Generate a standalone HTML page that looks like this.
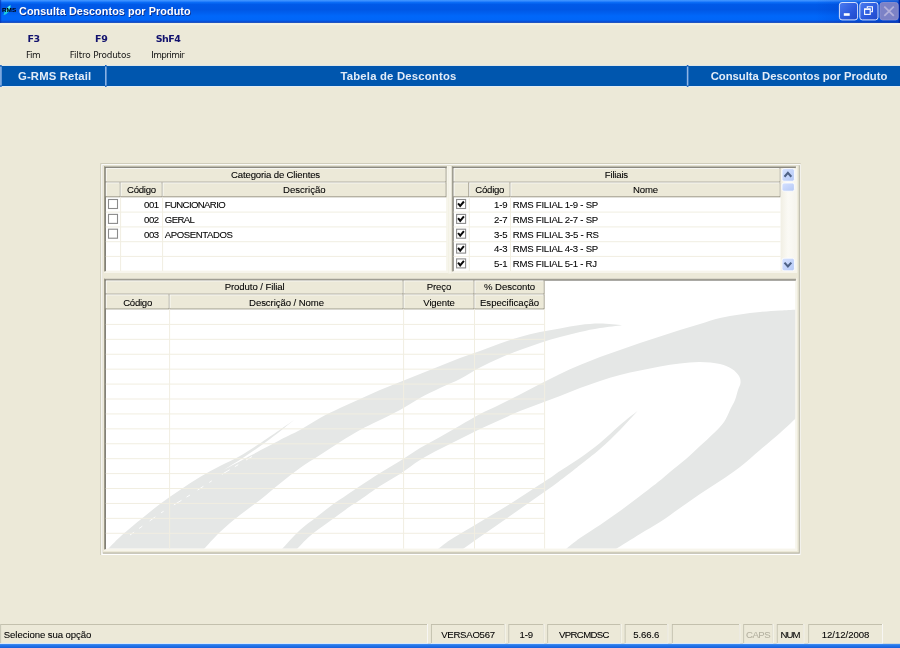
<!DOCTYPE html>
<html lang="pt-BR">
<head>
<meta charset="utf-8">
<title>Consulta Descontos por Produto</title>
<style>
*{box-sizing:border-box;margin:0;padding:0}
html,body{width:900px;height:648px;overflow:hidden;background:#ECE9D8;font-family:"Liberation Sans",sans-serif;color:#000}
#app{position:relative;width:900px;height:648px;overflow:hidden}
#tx{position:absolute;left:0;top:0;width:900px;height:648px;will-change:transform}
#bg{position:absolute;left:0;top:0}
.t{position:absolute;white-space:nowrap;line-height:1.15}
.g{font-size:9.6px;color:#000;-webkit-text-stroke-width:0.08px}
.dis{color:#B4B1A0}
.ttl{font-weight:bold;font-size:11.7px;color:#fff;text-shadow:0.8px 0.8px 0.6px #0B2E8C;transform:scaleX(0.9225);transform-origin:0 0;letter-spacing:0.1px}
.ico{font-size:4.7px;font-weight:bold;color:#000;transform:scaleX(1.36);transform-origin:0 0}
.k{font-family:"DejaVu Sans","Liberation Sans",sans-serif;font-weight:bold;font-size:9.5px;color:#12126E}
.lb{font-family:"DejaVu Sans","Liberation Sans",sans-serif;font-size:8.9px;color:#151515}
.bb{font-weight:bold;font-size:11.3px;color:#E3ECF7}
</style>
</head>
<body>
<div id="app">
<svg id="bg" width="900" height="648" viewBox="0 0 900 648"><rect x="100.3" y="163.2" width="700.4" height="391.8" fill="#C9C6B4"/>
<rect x="101.2" y="164.1" width="699.5" height="390.9" fill="#FFFFFF"/>
<rect x="102.7" y="165.2" width="697.1" height="388.5" fill="#B4B1A0"/>
<rect x="102.7" y="165.2" width="696.1" height="387.3" fill="#ECE9D8"/>
<rect x="104" y="166.3" width="344" height="106.2" fill="#FFFFFF"/>
<rect x="104" y="270.6" width="344" height="1.9" fill="#F7F5EC"/>
<rect x="446.1" y="166.3" width="1.9" height="106.2" fill="#F7F5EC"/>
<rect x="104" y="166.3" width="343" height="1" fill="#A19E8D"/>
<rect x="104" y="166.3" width="1" height="105.2" fill="#A19E8D"/>
<rect x="104.9" y="167.2" width="341.8" height="1" fill="#75736A"/>
<rect x="104.9" y="167.2" width="1" height="104" fill="#75736A"/>
<rect x="105.8" y="168.1" width="340.7" height="14.4" fill="#9F9B89"/>
<rect x="105.8" y="168.1" width="339.55" height="13.25" fill="#FFFFFF"/>
<rect x="106.6" y="168.9" width="338.75" height="12.45" fill="#ECE9D8"/>
<rect x="105.8" y="182.5" width="14.8" height="14.8" fill="#9F9B89"/>
<rect x="105.8" y="182.5" width="13.65" height="13.65" fill="#FFFFFF"/>
<rect x="106.6" y="183.3" width="12.85" height="12.85" fill="#ECE9D8"/>
<rect x="120.6" y="182.5" width="42" height="14.8" fill="#9F9B89"/>
<rect x="120.6" y="182.5" width="40.85" height="13.65" fill="#FFFFFF"/>
<rect x="121.4" y="183.3" width="40.05" height="12.85" fill="#ECE9D8"/>
<rect x="162.6" y="182.5" width="283.9" height="14.8" fill="#9F9B89"/>
<rect x="162.6" y="182.5" width="282.75" height="13.65" fill="#FFFFFF"/>
<rect x="163.4" y="183.3" width="281.95" height="12.85" fill="#ECE9D8"/>
<rect x="105.8" y="211.6" width="340.7" height="1" fill="#F1EEE1"/>
<rect x="105.8" y="226.4" width="340.7" height="1" fill="#F1EEE1"/>
<rect x="105.8" y="241.2" width="340.7" height="1" fill="#F1EEE1"/>
<rect x="105.8" y="255.9" width="340.7" height="1" fill="#F1EEE1"/>
<rect x="120.1" y="197.3" width="1" height="73.7" fill="#F1EEE1"/>
<rect x="162.1" y="197.3" width="1" height="73.7" fill="#F1EEE1"/>
<rect x="448.3" y="166" width="3.2" height="107.5" fill="#F7F5EC"/>
<rect x="451.8" y="166.3" width="345.3" height="106.2" fill="#FFFFFF"/>
<rect x="451.8" y="270.6" width="345.3" height="1.9" fill="#F7F5EC"/>
<rect x="795.2" y="166.3" width="1.9" height="106.2" fill="#F7F5EC"/>
<rect x="451.8" y="166.3" width="344.3" height="1" fill="#A19E8D"/>
<rect x="451.8" y="166.3" width="1" height="105.2" fill="#A19E8D"/>
<rect x="452.7" y="167.2" width="343.1" height="1" fill="#75736A"/>
<rect x="452.7" y="167.2" width="1" height="104" fill="#75736A"/>
<rect x="453.6" y="168.1" width="327" height="14.4" fill="#9F9B89"/>
<rect x="453.6" y="168.1" width="325.85" height="13.25" fill="#FFFFFF"/>
<rect x="454.4" y="168.9" width="325.05" height="12.45" fill="#ECE9D8"/>
<rect x="453.6" y="182.5" width="15.7" height="14.8" fill="#9F9B89"/>
<rect x="453.6" y="182.5" width="14.55" height="13.65" fill="#FFFFFF"/>
<rect x="454.4" y="183.3" width="13.75" height="12.85" fill="#ECE9D8"/>
<rect x="469.3" y="182.5" width="41.2" height="14.8" fill="#9F9B89"/>
<rect x="469.3" y="182.5" width="40.05" height="13.65" fill="#FFFFFF"/>
<rect x="470.1" y="183.3" width="39.25" height="12.85" fill="#ECE9D8"/>
<rect x="510.5" y="182.5" width="270.1" height="14.8" fill="#9F9B89"/>
<rect x="510.5" y="182.5" width="268.95" height="13.65" fill="#FFFFFF"/>
<rect x="511.3" y="183.3" width="268.15" height="12.85" fill="#ECE9D8"/>
<rect x="453.6" y="211.6" width="327" height="1" fill="#F1EEE1"/>
<rect x="453.6" y="226.4" width="327" height="1" fill="#F1EEE1"/>
<rect x="453.6" y="241.2" width="327" height="1" fill="#F1EEE1"/>
<rect x="453.6" y="255.9" width="327" height="1" fill="#F1EEE1"/>
<rect x="468.8" y="197.3" width="1" height="73.7" fill="#F1EEE1"/>
<rect x="510" y="197.3" width="1" height="73.7" fill="#F1EEE1"/>
<defs><linearGradient id="trk" x1="0" x2="1" y1="0" y2="0"><stop offset="0" stop-color="#F1EFE4"/><stop offset="0.5" stop-color="#FBFAF5"/><stop offset="1" stop-color="#F6F5EE"/></linearGradient><linearGradient id="btn" x1="0" x2="1" y1="0" y2="1"><stop offset="0" stop-color="#D6E2FF"/><stop offset="1" stop-color="#B4C8F6"/></linearGradient><linearGradient id="tb" x1="0" x2="0" y1="0" y2="1"><stop offset="0" stop-color="#459AFF"/><stop offset="0.05" stop-color="#2F86FF"/><stop offset="0.11" stop-color="#0A6CF6"/><stop offset="0.2" stop-color="#0059E8"/><stop offset="0.42" stop-color="#0057E5"/><stop offset="0.56" stop-color="#005FEF"/><stop offset="0.7" stop-color="#0067FA"/><stop offset="0.87" stop-color="#0066F8"/><stop offset="0.94" stop-color="#0A50D6"/><stop offset="1" stop-color="#0840B8"/></linearGradient><linearGradient id="wb" x1="0" x2="1" y1="0" y2="1"><stop offset="0" stop-color="#4C7CF0"/><stop offset="0.6" stop-color="#2A58DC"/><stop offset="1" stop-color="#1F48C8"/></linearGradient><linearGradient id="bb" x1="0" x2="0" y1="0" y2="1"><stop offset="0" stop-color="#4A92F2"/><stop offset="0.4" stop-color="#2577EA"/><stop offset="1" stop-color="#165FDC"/></linearGradient><linearGradient id="tbr" x1="0" x2="1" y1="0" y2="0"><stop offset="0" stop-color="#0020A0" stop-opacity="0"/><stop offset="1" stop-color="#0020A0" stop-opacity="0.4"/></linearGradient></defs>
<rect x="780.6" y="168.1" width="15" height="102.9" fill="url(#trk)"/>
<rect x="782" y="168.6" width="12.4" height="12.6" rx="2" fill="url(#btn)" stroke="#FFFFFF" stroke-width="0.8"/>
<rect x="782" y="183" width="12.4" height="8.2" rx="2" fill="url(#btn)" stroke="#FFFFFF" stroke-width="0.8"/>
<rect x="782" y="258.2" width="12.4" height="12.6" rx="2" fill="url(#btn)" stroke="#FFFFFF" stroke-width="0.8"/>
<path d="M784.5 176.7 L787.9 172.9 L791.3 176.7" fill="none" stroke="#4D6185" stroke-width="2.1"/>
<path d="M784.5 262.6 L787.9 266.4 L791.3 262.6" fill="none" stroke="#4D6185" stroke-width="2.1"/>
<rect x="104" y="278.7" width="693.1" height="271.8" fill="#FFFFFF"/>
<rect x="104" y="548.6" width="693.1" height="1.9" fill="#F7F5EC"/>
<rect x="795.2" y="278.7" width="1.9" height="271.8" fill="#F7F5EC"/>
<rect x="104" y="278.7" width="692.1" height="1" fill="#A19E8D"/>
<rect x="104" y="278.7" width="1" height="270.8" fill="#A19E8D"/>
<rect x="104.9" y="279.6" width="690.9" height="1" fill="#75736A"/>
<rect x="104.9" y="279.6" width="1" height="269.6" fill="#75736A"/>
<clipPath id="wm"><rect x="105.8" y="280.5" width="689.4" height="268.1"/></clipPath>
<g clip-path="url(#wm)" fill="#E5E7E6"><path d="M108.0 549.0 C110.0 547.0 114.7 541.8 120.0 537.0 C125.3 532.2 133.3 525.5 140.0 520.0 C146.7 514.5 153.3 509.0 160.0 504.0 C166.7 499.0 173.3 494.5 180.0 490.0 C186.7 485.5 193.3 481.0 200.0 477.0 C206.7 473.0 213.3 469.5 220.0 466.0 C226.7 462.5 233.0 460.0 240.0 456.0 C247.0 452.0 253.0 448.0 262.0 442.0 C271.0 436.0 288.7 423.7 294.0 420.0 C290.0 423.2 278.2 432.9 270.0 439.0 C261.8 445.1 253.0 451.2 245.0 456.5 C237.0 461.8 225.8 468.6 222.0 471.0 C226.0 468.8 236.3 463.2 246.0 458.0 C255.7 452.8 271.0 444.7 280.0 440.0 C289.0 435.3 293.3 433.7 300.0 430.0 C306.7 426.3 313.3 421.7 320.0 418.0 C326.7 414.3 333.3 411.2 340.0 408.0 C346.7 404.8 353.3 402.0 360.0 399.0 C366.7 396.0 373.3 392.8 380.0 390.0 C386.7 387.2 393.3 384.7 400.0 382.0 C406.7 379.3 413.3 376.7 420.0 374.0 C426.7 371.3 433.3 368.7 440.0 366.0 C446.7 363.3 453.3 360.5 460.0 358.0 C466.7 355.5 473.3 353.4 480.0 351.0 C486.7 348.6 493.3 345.8 500.0 343.5 C506.7 341.2 513.3 338.9 520.0 337.0 C526.7 335.1 533.3 333.4 540.0 332.0 C546.7 330.6 553.3 329.6 560.0 328.4 C566.7 327.2 573.3 325.8 580.0 325.0 C586.7 324.2 593.0 323.6 600.0 323.6 C607.0 323.6 618.3 324.9 622.0 325.2 C618.3 325.7 607.0 326.9 600.0 328.0 C593.0 329.1 586.7 330.5 580.0 332.0 C573.3 333.5 566.7 335.2 560.0 337.0 C553.3 338.8 546.7 340.8 540.0 343.0 C533.3 345.2 526.7 347.5 520.0 350.0 C513.3 352.5 506.7 355.1 500.0 358.0 C493.3 360.9 486.7 364.0 480.0 367.5 C473.3 371.0 466.7 375.6 460.0 379.0 C453.3 382.4 446.7 384.8 440.0 388.0 C433.3 391.2 426.7 394.3 420.0 398.0 C413.3 401.7 407.0 406.2 400.0 410.0 C393.0 413.8 384.7 417.7 378.0 421.0 C371.3 424.3 366.3 426.5 360.0 430.0 C353.7 433.5 346.7 437.8 340.0 442.0 C333.3 446.2 326.7 450.7 320.0 455.0 C313.3 459.3 306.7 463.2 300.0 468.0 C293.3 472.8 286.7 478.2 280.0 483.5 C273.3 488.8 266.7 494.8 260.0 500.0 C253.3 505.2 246.7 509.7 240.0 515.0 C233.3 520.3 226.0 526.3 220.0 532.0 C214.0 537.7 206.7 546.2 204.0 549.0 Z"/><path d="M282.0 549.0 C285.0 545.8 294.3 535.2 300.0 530.0 C305.7 524.8 310.7 521.7 316.0 517.5 C321.3 513.3 326.9 508.8 332.0 505.0 C337.1 501.2 342.0 498.2 346.7 495.0 C351.4 491.8 354.4 489.7 360.0 486.0 C365.6 482.3 373.3 477.2 380.0 473.0 C386.7 468.8 393.3 465.2 400.0 461.0 C406.7 456.8 413.3 452.0 420.0 448.0 C426.7 444.0 433.3 440.8 440.0 437.0 C446.7 433.2 453.3 429.3 460.0 425.5 C466.7 421.7 473.3 417.5 480.0 414.0 C486.7 410.5 493.3 407.8 500.0 404.5 C506.7 401.2 513.3 397.9 520.0 394.5 C526.7 391.1 533.3 387.4 540.0 384.0 C546.7 380.6 553.3 377.2 560.0 374.0 C566.7 370.8 573.3 367.8 580.0 365.0 C586.7 362.2 593.3 359.5 600.0 357.0 C606.7 354.5 613.3 352.3 620.0 350.0 C626.7 347.7 633.3 345.2 640.0 343.0 C646.7 340.8 653.3 338.7 660.0 336.5 C666.7 334.3 673.3 332.1 680.0 330.0 C686.7 327.9 693.3 326.0 700.0 324.0 C706.7 322.0 713.3 319.6 720.0 318.0 C726.7 316.4 733.3 315.4 740.0 314.4 C746.7 313.4 753.3 312.7 760.0 312.0 C766.7 311.3 773.8 310.8 780.0 310.4 C786.2 310.0 794.2 309.7 797.0 309.6 L797 417 C794.2 419.7 786.2 427.5 780.0 433.0 C773.8 438.5 766.7 444.3 760.0 450.0 C753.3 455.7 746.7 461.8 740.0 467.0 C733.3 472.2 726.7 476.5 720.0 481.0 C713.3 485.5 706.7 489.5 700.0 494.0 C693.3 498.5 686.7 503.3 680.0 508.0 C673.3 512.7 666.7 517.7 660.0 522.0 C653.3 526.3 647.3 529.5 640.0 534.0 C632.7 538.5 620.0 546.5 616.0 549.0 L566 549.0 C568.3 547.2 574.3 542.0 580.0 538.0 C585.7 534.0 593.3 529.5 600.0 525.0 C606.7 520.5 613.3 515.8 620.0 511.0 C626.7 506.2 633.3 501.1 640.0 496.0 C646.7 490.9 655.0 484.5 660.0 480.5 C665.0 476.5 665.7 475.6 670.0 472.0 C674.3 468.4 681.0 463.3 686.0 459.0 C691.0 454.7 695.3 450.3 700.0 446.0 C704.7 441.7 710.0 437.0 714.0 433.0 C718.0 429.0 721.3 425.8 724.0 422.0 C726.7 418.2 728.2 413.7 730.0 410.0 C731.8 406.3 733.7 403.3 735.0 400.0 C736.3 396.7 737.1 392.8 738.0 390.0 C738.9 387.2 740.3 385.3 740.5 383.0 C740.7 380.7 740.4 378.3 739.0 376.0 C737.6 373.7 735.2 371.0 732.0 369.0 C728.8 367.0 725.3 365.2 720.0 364.0 C714.7 362.8 706.7 362.1 700.0 362.0 C693.3 361.9 686.7 362.8 680.0 363.5 C673.3 364.2 666.7 365.3 660.0 366.5 C653.3 367.7 646.7 369.1 640.0 370.5 C633.3 371.9 626.7 373.2 620.0 375.0 C613.3 376.8 606.7 378.8 600.0 381.0 C593.3 383.2 586.7 385.5 580.0 388.0 C573.3 390.5 566.7 393.4 560.0 396.0 C553.3 398.6 546.7 401.1 540.0 403.6 C533.3 406.1 526.7 408.3 520.0 411.0 C513.3 413.7 506.7 417.0 500.0 420.0 C493.3 423.0 486.7 425.8 480.0 429.0 C473.3 432.2 466.7 435.7 460.0 439.0 C453.3 442.3 446.7 445.5 440.0 449.0 C433.3 452.5 426.7 455.8 420.0 460.0 C413.3 464.2 406.7 469.7 400.0 474.0 C393.3 478.3 386.7 481.7 380.0 486.0 C373.3 490.3 365.0 496.6 360.0 500.0 C355.0 503.4 355.0 503.0 350.0 506.5 C345.0 510.0 336.7 516.1 330.0 521.0 C323.3 525.9 315.5 531.3 310.0 536.0 C304.5 540.7 299.2 546.8 297.0 549.0 Z"/><path d="M438.0 549.0 C440.0 547.5 444.7 543.5 450.0 540.0 C455.3 536.5 463.3 532.0 470.0 528.0 C476.7 524.0 483.3 520.0 490.0 516.0 C496.7 512.0 503.3 508.2 510.0 504.0 C516.7 499.8 523.3 495.3 530.0 491.0 C536.7 486.7 545.0 481.3 550.0 478.0 C555.0 474.7 555.0 474.3 560.0 471.0 C565.0 467.7 573.3 462.7 580.0 458.0 C586.7 453.3 593.3 448.5 600.0 443.0 C606.7 437.5 613.8 430.3 620.0 425.0 C626.2 419.7 634.6 413.3 637.5 411.0 C634.6 414.2 626.2 423.7 620.0 430.0 C613.8 436.3 606.7 443.2 600.0 449.0 C593.3 454.8 585.0 461.0 580.0 465.0 C575.0 469.0 575.0 469.2 570.0 473.0 C565.0 476.8 556.7 483.2 550.0 488.0 C543.3 492.8 536.7 497.3 530.0 502.0 C523.3 506.7 516.7 511.3 510.0 516.0 C503.3 520.7 497.8 524.5 490.0 530.0 C482.2 535.5 467.5 545.8 463.0 549.0 Z"/></g>
<path d="M252 456.5 L220 475.5 L190 495 L160 513.5 L130 535" fill="none" stroke="#fff" stroke-width="0.9" stroke-dasharray="7 9 4 6 9 12 3 7" clip-path="url(#wm)"/>
<rect x="105.8" y="280.5" width="297.8" height="14" fill="#9F9B89"/>
<rect x="105.8" y="280.5" width="296.65" height="12.85" fill="#FFFFFF"/>
<rect x="106.6" y="281.3" width="295.85" height="12.05" fill="#ECE9D8"/>
<rect x="403.6" y="280.5" width="70.9" height="14" fill="#9F9B89"/>
<rect x="403.6" y="280.5" width="69.75" height="12.85" fill="#FFFFFF"/>
<rect x="404.4" y="281.3" width="68.95" height="12.05" fill="#ECE9D8"/>
<rect x="474.5" y="280.5" width="70.1" height="14" fill="#9F9B89"/>
<rect x="474.5" y="280.5" width="68.95" height="12.85" fill="#FFFFFF"/>
<rect x="475.3" y="281.3" width="68.15" height="12.05" fill="#ECE9D8"/>
<rect x="105.8" y="294.5" width="63.8" height="14.9" fill="#9F9B89"/>
<rect x="105.8" y="294.5" width="62.65" height="13.75" fill="#FFFFFF"/>
<rect x="106.6" y="295.3" width="61.85" height="12.95" fill="#ECE9D8"/>
<rect x="169.6" y="294.5" width="234" height="14.9" fill="#9F9B89"/>
<rect x="169.6" y="294.5" width="232.85" height="13.75" fill="#FFFFFF"/>
<rect x="170.4" y="295.3" width="232.05" height="12.95" fill="#ECE9D8"/>
<rect x="403.6" y="294.5" width="70.9" height="14.9" fill="#9F9B89"/>
<rect x="403.6" y="294.5" width="69.75" height="13.75" fill="#FFFFFF"/>
<rect x="404.4" y="295.3" width="68.95" height="12.95" fill="#ECE9D8"/>
<rect x="474.5" y="294.5" width="70.1" height="14.9" fill="#9F9B89"/>
<rect x="474.5" y="294.5" width="68.95" height="13.75" fill="#FFFFFF"/>
<rect x="475.3" y="295.3" width="68.15" height="12.95" fill="#ECE9D8"/>
<rect x="105.8" y="323.9" width="438.8" height="1" fill="#F1EEE1"/>
<rect x="105.8" y="338.82" width="438.8" height="1" fill="#F1EEE1"/>
<rect x="105.8" y="353.74" width="438.8" height="1" fill="#F1EEE1"/>
<rect x="105.8" y="368.66" width="438.8" height="1" fill="#F1EEE1"/>
<rect x="105.8" y="383.58" width="438.8" height="1" fill="#F1EEE1"/>
<rect x="105.8" y="398.5" width="438.8" height="1" fill="#F1EEE1"/>
<rect x="105.8" y="413.42" width="438.8" height="1" fill="#F1EEE1"/>
<rect x="105.8" y="428.34" width="438.8" height="1" fill="#F1EEE1"/>
<rect x="105.8" y="443.26" width="438.8" height="1" fill="#F1EEE1"/>
<rect x="105.8" y="458.18" width="438.8" height="1" fill="#F1EEE1"/>
<rect x="105.8" y="473.1" width="438.8" height="1" fill="#F1EEE1"/>
<rect x="105.8" y="488.02" width="438.8" height="1" fill="#F1EEE1"/>
<rect x="105.8" y="502.94" width="438.8" height="1" fill="#F1EEE1"/>
<rect x="105.8" y="517.86" width="438.8" height="1" fill="#F1EEE1"/>
<rect x="105.8" y="532.78" width="438.8" height="1" fill="#F1EEE1"/>
<rect x="169.1" y="309.4" width="1" height="239.2" fill="#F1EEE1"/>
<rect x="403.1" y="309.4" width="1" height="239.2" fill="#F1EEE1"/>
<rect x="474" y="309.4" width="1" height="239.2" fill="#F1EEE1"/>
<rect x="544.1" y="309.4" width="1" height="239.2" fill="#F1EEE1"/>
<rect x="108.5" y="199.5" width="9" height="9" fill="#FFFFFF" stroke="#8B8B8B" stroke-width="1.1"/>
<rect x="108.5" y="214.4" width="9" height="9" fill="#FFFFFF" stroke="#8B8B8B" stroke-width="1.1"/>
<rect x="108.5" y="229.2" width="9" height="9" fill="#FFFFFF" stroke="#8B8B8B" stroke-width="1.1"/>
<rect x="456.6" y="199.5" width="9" height="9" fill="#FFFFFF" stroke="#8B8B8B" stroke-width="1.1"/>
<path d="M458.1 203.3 L460.2 206 L463.9 201.5" fill="none" stroke="#0a0a0a" stroke-width="2"/>
<rect x="456.6" y="214.4" width="9" height="9" fill="#FFFFFF" stroke="#8B8B8B" stroke-width="1.1"/>
<path d="M458.1 218.2 L460.2 220.9 L463.9 216.4" fill="none" stroke="#0a0a0a" stroke-width="2"/>
<rect x="456.6" y="229.2" width="9" height="9" fill="#FFFFFF" stroke="#8B8B8B" stroke-width="1.1"/>
<path d="M458.1 233 L460.2 235.7 L463.9 231.2" fill="none" stroke="#0a0a0a" stroke-width="2"/>
<rect x="456.6" y="244.1" width="9" height="9" fill="#FFFFFF" stroke="#8B8B8B" stroke-width="1.1"/>
<path d="M458.1 247.9 L460.2 250.6 L463.9 246.1" fill="none" stroke="#0a0a0a" stroke-width="2"/>
<rect x="456.6" y="258.9" width="9" height="9" fill="#FFFFFF" stroke="#8B8B8B" stroke-width="1.1"/>
<path d="M458.1 262.7 L460.2 265.4 L463.9 260.9" fill="none" stroke="#0a0a0a" stroke-width="2"/>
<rect x="0" y="0" width="900" height="22.9" fill="url(#tb)"/>
<rect x="0" y="0" width="1.2" height="22.8" fill="#0333B8" opacity="0.7"/>
<rect x="815" y="0" width="85" height="22.9" fill="url(#tbr)"/>
<rect x="898.7" y="0" width="1.3" height="22.8" fill="#00209A"/>
<rect x="0" y="23.3" width="900" height="1.9" fill="#F4F2E7"/>
<rect x="839.4" y="2.5" width="18.2" height="17.4" rx="2.6" fill="url(#wb)" stroke="#E9EEFF" stroke-width="0.9"/>
<rect x="859.8" y="2.5" width="18.2" height="17.4" rx="2.6" fill="url(#wb)" stroke="#E9EEFF" stroke-width="0.9"/>
<rect x="880" y="2.5" width="18.2" height="17.4" rx="2.6" fill="#7C82C6" stroke="#8C90CE" stroke-width="0.9"/>
<rect x="843.8" y="13.2" width="5.9" height="2.6" fill="#FFFFFF"/>
<path d="M867.3 8 V6.8 H872.4 V11.6 H871.2" fill="none" stroke="#fff" stroke-width="1.1"/>
<rect x="864.6" y="9.2" width="5.6" height="5.2" fill="none" stroke="#fff" stroke-width="1.1"/>
<rect x="864.1" y="8.4" width="6.6" height="1.3" fill="#FFFFFF"/>
<path d="M884.3 6.6 L893.8 15.8 M893.8 6.6 L884.3 15.8" stroke="#B2B0DB" stroke-width="1.8" fill="none"/>
<path d="M3.5 15.1 C4.3 11 6.8 7 10.5 5 C11.3 7.6 9.6 11.6 6.3 13.9 C5.4 14.5 4.5 14.9 3.5 15.1 Z" fill="#16CFE4"/>
<path d="M6.4 10 C7.3 8 8.6 6.5 10.2 5.6 C10.3 7 9.6 8.6 8.5 10 C7.6 11.2 6.6 12 5.8 12.4 Z" fill="#63ECFA"/>
<rect x="0" y="65.2" width="900" height="1" fill="#F9F8F2"/>
<rect x="0" y="86" width="900" height="0.9" fill="#FFFFFF"/>
<rect x="0" y="65.9" width="900" height="20.2" fill="#0056AE"/>
<rect x="0.1" y="65" width="1.6" height="21.9" fill="#1A63BC"/>
<rect x="0.15" y="66.6" width="1.5" height="18.9" fill="#8FB5E5"/>
<rect x="105" y="65" width="1.6" height="21.9" fill="#1A63BC"/>
<rect x="105.05" y="66.6" width="1.5" height="18.9" fill="#8FB5E5"/>
<rect x="686.8" y="65" width="1.6" height="21.9" fill="#1A63BC"/>
<rect x="686.85" y="66.6" width="1.5" height="18.9" fill="#8FB5E5"/>
<rect x="0.2" y="624" width="427.8" height="19.9" fill="#FFFFFF"/>
<rect x="0.2" y="624" width="426.9" height="19" fill="#BFBCA9"/>
<rect x="1.1" y="624.9" width="426" height="18.1" fill="#ECE9D8"/>
<rect x="430.9" y="624" width="74.5" height="19.9" fill="#FFFFFF"/>
<rect x="430.9" y="624" width="73.6" height="19" fill="#BFBCA9"/>
<rect x="431.8" y="624.9" width="72.7" height="18.1" fill="#ECE9D8"/>
<rect x="508.3" y="624" width="36" height="19.9" fill="#FFFFFF"/>
<rect x="508.3" y="624" width="35.1" height="19" fill="#BFBCA9"/>
<rect x="509.2" y="624.9" width="34.2" height="18.1" fill="#ECE9D8"/>
<rect x="547.2" y="624" width="74.2" height="19.9" fill="#FFFFFF"/>
<rect x="547.2" y="624" width="73.3" height="19" fill="#BFBCA9"/>
<rect x="548.1" y="624.9" width="72.4" height="18.1" fill="#ECE9D8"/>
<rect x="624.6" y="624" width="43.6" height="19.9" fill="#FFFFFF"/>
<rect x="624.6" y="624" width="42.7" height="19" fill="#BFBCA9"/>
<rect x="625.5" y="624.9" width="41.8" height="18.1" fill="#ECE9D8"/>
<rect x="671.8" y="624" width="68.4" height="19.9" fill="#FFFFFF"/>
<rect x="671.8" y="624" width="67.5" height="19" fill="#BFBCA9"/>
<rect x="672.7" y="624.9" width="66.6" height="18.1" fill="#ECE9D8"/>
<rect x="743.2" y="624" width="30.2" height="19.9" fill="#FFFFFF"/>
<rect x="743.2" y="624" width="29.3" height="19" fill="#BFBCA9"/>
<rect x="744.1" y="624.9" width="28.4" height="18.1" fill="#ECE9D8"/>
<rect x="776.7" y="624" width="27.5" height="19.9" fill="#FFFFFF"/>
<rect x="776.7" y="624" width="26.6" height="19" fill="#BFBCA9"/>
<rect x="777.6" y="624.9" width="25.7" height="18.1" fill="#ECE9D8"/>
<rect x="808.2" y="624" width="74.8" height="19.9" fill="#FFFFFF"/>
<rect x="808.2" y="624" width="73.9" height="19" fill="#BFBCA9"/>
<rect x="809.1" y="624.9" width="73" height="18.1" fill="#ECE9D8"/>
<rect x="0" y="643.8" width="900" height="4.2" fill="url(#bb)"/></svg>
<div id="tx">
<div class="t ttl" style="left:19.3px;top:4.3px;">Consulta Descontos por Produto</div>
<div class="t ico" style="left:2px;top:7.7px;">RMS</div>
<div class="t k" style="left:33.6727px;top:33.8px;transform:translateX(-50%);letter-spacing:-0.255px;">F3</div>
<div class="t lb" style="left:33.087px;top:49.7px;transform:translateX(-50%);letter-spacing:-0.426px;">Fim</div>
<div class="t k" style="left:101.273px;top:33.8px;transform:translateX(-50%);letter-spacing:-0.255px;">F9</div>
<div class="t lb" style="left:100.212px;top:49.7px;transform:translateX(-50%);letter-spacing:-0.177px;">Filtro Produtos</div>
<div class="t k" style="left:167.935px;top:33.8px;transform:translateX(-50%);letter-spacing:-0.530px;">ShF4</div>
<div class="t lb" style="left:167.695px;top:49.7px;transform:translateX(-50%);letter-spacing:-0.610px;">Imprimir</div>
<div class="t bb" style="left:54.6724px;top:70.3px;transform:translateX(-50%);letter-spacing:0.145px;">G-RMS Retail</div>
<div class="t bb" style="left:398.501px;top:70.3px;transform:translateX(-50%);letter-spacing:0.201px;">Tabela de Descontos</div>
<div class="t bb" style="left:798.995px;top:70.3px;transform:translateX(-50%);letter-spacing:-0.010px;">Consulta Descontos por Produto</div>
<div class="t g" style="left:275.522px;top:169.3px;transform:translateX(-50%);letter-spacing:-0.156px;">Categoria de Clientes</div>
<div class="t g" style="left:141.466px;top:184.1px;transform:translateX(-50%);letter-spacing:-0.268px;">Código</div>
<div class="t g" style="left:304.297px;top:184.1px;transform:translateX(-50%);letter-spacing:-0.006px;">Descrição</div>
<div class="t g" style="left:158.795px;top:198.9px;transform:translateX(-100%);letter-spacing:-0.405px;">001</div>
<div class="t g" style="left:164.8px;top:198.9px;letter-spacing:-0.632px;">FUNCIONARIO</div>
<div class="t g" style="left:158.795px;top:213.7px;transform:translateX(-100%);letter-spacing:-0.405px;">002</div>
<div class="t g" style="left:164.8px;top:213.7px;letter-spacing:-0.606px;">GERAL</div>
<div class="t g" style="left:158.795px;top:228.5px;transform:translateX(-100%);letter-spacing:-0.405px;">003</div>
<div class="t g" style="left:164.8px;top:228.5px;letter-spacing:-0.430px;">APOSENTADOS</div>
<div class="t g" style="left:616.405px;top:169.3px;transform:translateX(-50%);letter-spacing:-0.190px;">Filiais</div>
<div class="t g" style="left:489.766px;top:184.1px;transform:translateX(-50%);letter-spacing:-0.268px;">Código</div>
<div class="t g" style="left:645.476px;top:184.1px;transform:translateX(-50%);letter-spacing:-0.148px;">Nome</div>
<div class="t g" style="left:507.308px;top:198.9px;transform:translateX(-100%);letter-spacing:-0.192px;">1-9</div>
<div class="t g" style="left:512.8px;top:198.9px;letter-spacing:-0.239px;">RMS FILIAL 1-9 - SP</div>
<div class="t g" style="left:507.308px;top:213.7px;transform:translateX(-100%);letter-spacing:-0.192px;">2-7</div>
<div class="t g" style="left:512.8px;top:213.7px;letter-spacing:-0.239px;">RMS FILIAL 2-7 - SP</div>
<div class="t g" style="left:507.308px;top:228.5px;transform:translateX(-100%);letter-spacing:-0.192px;">3-5</div>
<div class="t g" style="left:512.8px;top:228.5px;letter-spacing:-0.225px;">RMS FILIAL 3-5 - RS</div>
<div class="t g" style="left:507.308px;top:243.3px;transform:translateX(-100%);letter-spacing:-0.192px;">4-3</div>
<div class="t g" style="left:512.8px;top:243.3px;letter-spacing:-0.239px;">RMS FILIAL 4-3 - SP</div>
<div class="t g" style="left:507.308px;top:258.1px;transform:translateX(-100%);letter-spacing:-0.192px;">5-1</div>
<div class="t g" style="left:512.8px;top:258.1px;letter-spacing:-0.246px;">RMS FILIAL 5-1 - RJ</div>
<div class="t g" style="left:254.658px;top:281.3px;transform:translateX(-50%);letter-spacing:-0.083px;">Produto / Filial</div>
<div class="t g" style="left:438.964px;top:281.3px;transform:translateX(-50%);letter-spacing:-0.173px;">Preço</div>
<div class="t g" style="left:509.523px;top:281.3px;transform:translateX(-50%);letter-spacing:-0.053px;">% Desconto</div>
<div class="t g" style="left:137.566px;top:296.7px;transform:translateX(-50%);letter-spacing:-0.268px;">Código</div>
<div class="t g" style="left:286.561px;top:296.7px;transform:translateX(-50%);letter-spacing:-0.078px;">Descrição / Nome</div>
<div class="t g" style="left:438.973px;top:296.7px;transform:translateX(-50%);letter-spacing:-0.154px;">Vigente</div>
<div class="t g" style="left:509.55px;top:296.7px;transform:translateX(-50%);letter-spacing:-0.000px;">Especificação</div>
<div class="t g" style="left:3.8px;top:628.8px;letter-spacing:-0.083px;">Selecione sua opção</div>
<div class="t g" style="left:468.022px;top:628.8px;transform:translateX(-50%);letter-spacing:-0.256px;">VERSAO567</div>
<div class="t g" style="left:526.204px;top:628.8px;transform:translateX(-50%);letter-spacing:-0.192px;">1-9</div>
<div class="t g" style="left:583.981px;top:628.8px;transform:translateX(-50%);letter-spacing:-0.638px;">VPRCMDSC</div>
<div class="t g" style="left:646.343px;top:628.8px;transform:translateX(-50%);letter-spacing:-0.115px;">5.66.6</div>
<div class="t g dis" style="left:758.032px;top:628.8px;transform:translateX(-50%);letter-spacing:-0.535px;">CAPS</div>
<div class="t g" style="left:789.973px;top:628.8px;transform:translateX(-50%);letter-spacing:-0.953px;">NUM</div>
<div class="t g" style="left:845.579px;top:628.8px;transform:translateX(-50%);letter-spacing:-0.042px;">12/12/2008</div>
</div>
</div>
</body>
</html>
